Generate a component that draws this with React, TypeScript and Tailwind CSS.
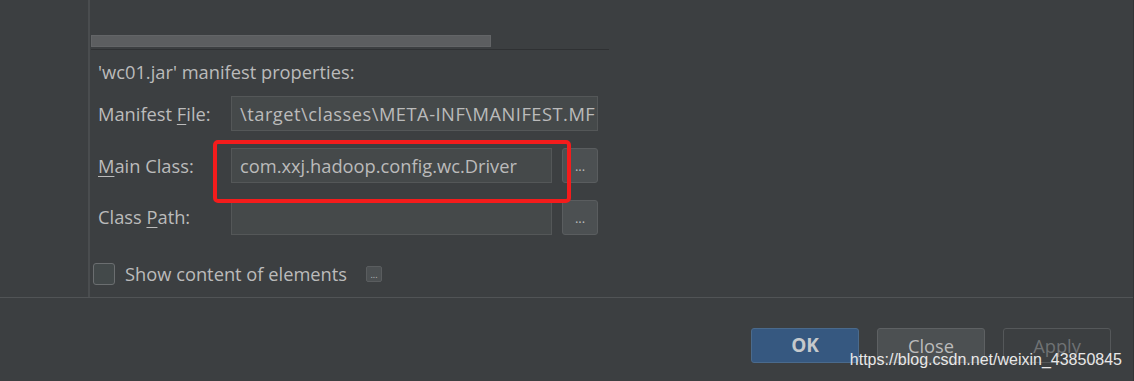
import React from 'react'

const font = { fontFamily: '"Open Sans", "Noto Sans", sans-serif' }

function Mn({ children }: { children: React.ReactNode }) {
  return <span className="underline underline-offset-[3px]">{children}</span>
}

function DotsButton() {
  return (
    <div className="w-[36px] h-[35px] rounded-[3px] bg-[#4c5052] border border-[#5a5d5f] flex items-end justify-center pb-[9px] text-[#bbbbbb] text-[13px] leading-none">
      ...
    </div>
  )
}

export default function App() {
  return (
    <div
      className="w-[1134px] h-[381px] bg-[#3c3f41] text-[#bbbbbb] flex flex-col overflow-hidden border-r border-[#323435]"
      style={font}
    >
      {/* top part with left panel */}
      <div className="flex h-[298px] border-b border-[#515456]">
        <div className="w-[88px] shrink-0" />
        <div className="w-[2px] bg-[#4a4d4f] shrink-0" />
        <div className="flex-1 flex flex-col relative">
          {/* scrollbar */}
          <div className="mt-[35px] ml-[1px] w-[400px] h-[12px] bg-[#5c5e60] border border-[#636567]" />
          <div className="mt-[2px] ml-[1px] w-[518px] h-px bg-[#2f3133]" />

          <div className="pl-[8px] text-[18.3px] leading-[24px] mt-[10px]">'wc01.jar' manifest properties:</div>

          <div className="pl-[8px] pr-[535px] mt-[12px] grid grid-cols-[133px_1fr_10px_36px] gap-y-[17px] items-center text-[18.3px]">
            <div>
              Manifest <Mn>F</Mn>ile:
            </div>
            <div className="col-span-3 h-[35px] bg-[#45494a] border border-[#545758] flex items-center pl-[8px] overflow-hidden whitespace-nowrap tracking-[0.5px]">
              \target\classes\META-INF\MANIFEST.MF
            </div>

            <div>
              <Mn>M</Mn>ain Class:
            </div>
            <div className="h-[35px] bg-[#45494a] border border-[#545758] flex items-center pl-[8px] whitespace-nowrap">
              com.xxj.hadoop.config.wc.Driver
            </div>
            <div />
            <DotsButton />

            <div className="-mt-[1px]">
              Class <Mn>P</Mn>ath:
            </div>
            <div className="h-[35px] bg-[#45494a] border border-[#545758]" />
            <div />
            <DotsButton />
          </div>

          <div className="flex items-center mt-[25px] ml-[3px]">
            <div className="w-[22px] h-[22px] rounded-[3px] border border-[#6b6e70] bg-[#43494a]" />
            <span className="ml-[10px] text-[18.3px]">Show content of elements</span>
            <div className="ml-[19px] w-[16px] h-[16px] rounded-[2px] bg-[#4c5052] border border-[#5a5d5f] flex items-end justify-center text-[9px] leading-none pb-[2px]">
              ...
            </div>
          </div>

          {/* annotation */}
          <div className="absolute left-[123px] top-[140px] w-[358px] h-[63px] border-[4px] border-[#f41c1c] rounded-[5px]" />
        </div>
      </div>

      {/* bottom buttons */}
      <div className="flex-1 flex justify-end items-start pt-[30px] pr-[22px] gap-[18px] relative">
        <div className="w-[108px] h-[35px] rounded-[3px] bg-[#365880] border border-[#4a6a8c] flex items-center justify-center font-bold text-[19px] text-[#c5c9cc]">
          OK
        </div>
        <div className="w-[108px] h-[35px] rounded-[3px] bg-[#4c5052] border border-[#5e6163] flex items-center justify-center text-[18.3px]">
          Close
        </div>
        <div className="w-[108px] h-[35px] rounded-[3px] border border-[#55585a] flex items-center justify-center text-[18.3px] text-[#6f7274]">
          Apply
        </div>
        <div
          className="absolute right-[11px] top-[52px] text-[16px] text-[#e8e8e8] leading-[20px]"
          style={{ fontFamily: '"Liberation Sans", Arial, sans-serif' }}
        >
          https://blog.csdn.net/weixin_43850845
        </div>
      </div>
    </div>
  )
}
